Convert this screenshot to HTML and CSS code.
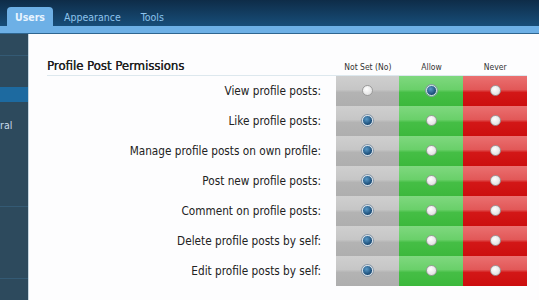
FILE: index.html
```html
<!DOCTYPE html>
<html lang="en">
<head>
    <meta charset="UTF-8">
    <title>Profile Post Permissions</title>
    <link rel="stylesheet" href="styles.css">
</head>
<body>
    <div id="header">
        <div class="tabs">
            <span class="tab active">Users</span>
            <span class="tab">Appearance</span>
            <span class="tab">Tools</span>
        </div>
        <div class="tabBar"></div>
    </div>
    <div id="page">
        <div id="sidebar">
            <div class="sideItem first"></div>
            <div class="sideGap"></div>
            <div class="sideItem selected"></div>
            <div class="sideItem tall"><span>ral</span></div>
            <div class="sideItem big"></div>
        </div>
        <div id="content">
            <div class="titleRow">
                <h2>Profile Post Permissions</h2>
                <div class="colHeads">
                    <span>Not Set (No)</span>
                    <span>Allow</span>
                    <span>Never</span>
                </div>
            </div>
            <div class="perm">
                <label>View profile posts:</label>
                <div class="cell unset"><i class="radio"></i></div>
                <div class="cell allow"><i class="radio on"></i></div>
                <div class="cell never"><i class="radio"></i></div>
            </div>
            <div class="perm">
                <label>Like profile posts:</label>
                <div class="cell unset"><i class="radio on"></i></div>
                <div class="cell allow"><i class="radio"></i></div>
                <div class="cell never"><i class="radio"></i></div>
            </div>
            <div class="perm">
                <label>Manage profile posts on own profile:</label>
                <div class="cell unset"><i class="radio on"></i></div>
                <div class="cell allow"><i class="radio"></i></div>
                <div class="cell never"><i class="radio"></i></div>
            </div>
            <div class="perm">
                <label>Post new profile posts:</label>
                <div class="cell unset"><i class="radio on"></i></div>
                <div class="cell allow"><i class="radio"></i></div>
                <div class="cell never"><i class="radio"></i></div>
            </div>
            <div class="perm">
                <label>Comment on profile posts:</label>
                <div class="cell unset"><i class="radio on"></i></div>
                <div class="cell allow"><i class="radio"></i></div>
                <div class="cell never"><i class="radio"></i></div>
            </div>
            <div class="perm">
                <label>Delete profile posts by self:</label>
                <div class="cell unset"><i class="radio on"></i></div>
                <div class="cell allow"><i class="radio"></i></div>
                <div class="cell never"><i class="radio"></i></div>
            </div>
            <div class="perm">
                <label>Edit profile posts by self:</label>
                <div class="cell unset"><i class="radio on"></i></div>
                <div class="cell allow"><i class="radio"></i></div>
                <div class="cell never"><i class="radio"></i></div>
            </div>
        </div>
    </div>
</body>
</html>
```
FILE: styles.css
```css
body {
    margin: 0;
    font-family: "DejaVu Sans Condensed", "DejaVu Sans", sans-serif;
    background: #fdfdfe;
    overflow: hidden;
}
#header {
    background: linear-gradient(#0e2c48, #1a5888);
}
.tabs {
    display: flex;
    padding: 7px 0 0 7px;
    height: 19px;
}
.tab {
    font-size: 10.5px;
    color: #8dc3ec;
    padding: 4px 9px 0;
    margin-right: 2px;
}
.tab.active {
    background: #6db0e6;
    color: #e8f4ff;
    font-weight: bold;
    padding: 4px 8px 0;
    border-radius: 4px 4px 0 0;
}
.tabBar {
    height: 7px;
    background: #6db0e6;
    border-bottom: 1px solid #2f6690;
}
#page {
    display: flex;
    height: 266px;
}
#sidebar {
    width: 28px;
    background: #2d4a5d;
    border-right: 1px solid #c6d6e0;
}
.sideItem {
    border-bottom: 1px solid #345a74;
}
.sideItem.first {
    height: 21px;
}
.sideGap {
    height: 31px;
}
.sideItem.selected {
    height: 15px;
    background: #1d6aa0;
    border-bottom: none;
}
.sideItem.tall {
    height: 87px;
    font-size: 10.5px;
    color: #c9dcea;
}
.sideItem.tall span {
    display: block;
    margin-top: 17px;
}
.sideItem.big {
    height: 71px;
}
#content {
    flex: 1;
    padding: 0 12px 0 18px;
}
.titleRow {
    display: flex;
    justify-content: space-between;
    align-items: flex-end;
    height: 41px;
    border-bottom: 1px solid #dde8ee;
}
h2 {
    margin: 0 0 2px;
    font-size: 13px;
    font-weight: normal;
    color: #1e1e1e;
    text-shadow: 0.3px 0 0 #1e1e1e;
}
.colHeads {
    display: flex;
    width: 191px;
    margin-bottom: 3px;
    font-size: 8.5px;
    color: #333;
}
.colHeads span {
    flex: 1;
    text-align: center;
}
.perm {
    display: flex;
    height: 30px;
    align-items: stretch;
}
.perm label {
    flex: 1;
    text-align: right;
    font-size: 11.7px;
    color: #222;
    padding-right: 15px;
    line-height: 30px;
}
.cell {
    width: 64px;
    display: flex;
    justify-content: center;
    align-items: center;
    padding-bottom: 2px;
    box-sizing: border-box;
}
.cell.unset {
    width: 63px;
    background: linear-gradient(#cfcfcf, #c6c6c6 45%, #b3b3b3 55%, #aeaeae);
}
.cell.allow {
    background: linear-gradient(#7fd87f, #6ad06a 45%, #45be45 55%, #3cb83c);
}
.cell.never {
    background: linear-gradient(#ea7070, #e25858 45%, #d31717 55%, #cc0e0e);
}
.radio {
    width: 9px;
    height: 9px;
    border-radius: 50%;
    background: radial-gradient(circle at 40% 35%, #ffffff, #d8d8d8);
    border: 1px solid #9a9a9a;
}
.radio.on {
    background: radial-gradient(circle at 40% 35%, #5a9ac8, #184a74 70%);
    border: 1px solid #d8e4ee;
    box-shadow: 0 0 0 1px #8899aa;
}
```
